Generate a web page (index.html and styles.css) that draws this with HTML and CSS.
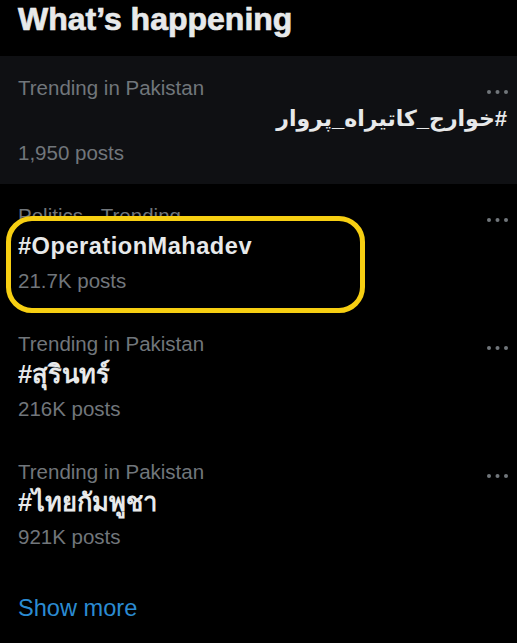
FILE: index.html
```html
<!DOCTYPE html>
<html lang="en">
<head>
<meta charset="utf-8">
<title>What’s happening</title>
<link rel="stylesheet" href="styles.css">
</head>
<body>
<section class="panel">
  <h2 class="title">What’s happening</h2>

  <div class="trend trend-hover">
    <div class="meta"><span>Trending in Pakistan</span><svg class="more" viewBox="0 0 21 25" aria-hidden="true"><circle cx="2" cy="17" r="2"/><circle cx="10.5" cy="17" r="2"/><circle cx="19" cy="17" r="2"/></svg></div>
    <div class="tag tag-rtl" dir="rtl">#خوارج_کاتیراه_پروار</div>
    <div class="count">1,950 posts</div>
  </div>

  <div class="trend">
    <div class="meta"><span>Politics · Trending</span><svg class="more" viewBox="0 0 21 25" aria-hidden="true"><circle cx="2" cy="17" r="2"/><circle cx="10.5" cy="17" r="2"/><circle cx="19" cy="17" r="2"/></svg></div>
    <div class="tag tag-latin">#OperationMahadev</div>
    <div class="count">21.7K posts</div>
    <div class="highlight"></div>
  </div>

  <div class="trend">
    <div class="meta"><span>Trending in Pakistan</span><svg class="more" viewBox="0 0 21 25" aria-hidden="true"><circle cx="2" cy="17" r="2"/><circle cx="10.5" cy="17" r="2"/><circle cx="19" cy="17" r="2"/></svg></div>
    <div class="tag tag-thai">#สุรินทร์</div>
    <div class="count">216K posts</div>
  </div>

  <div class="trend">
    <div class="meta"><span>Trending in Pakistan</span><svg class="more" viewBox="0 0 21 25" aria-hidden="true"><circle cx="2" cy="17" r="2"/><circle cx="10.5" cy="17" r="2"/><circle cx="19" cy="17" r="2"/></svg></div>
    <div class="tag tag-thai">#ไทยกัมพูชา</div>
    <div class="count">921K posts</div>
  </div>

  <a class="show-more" href="#">Show more</a>
</section>
</body>
</html>
```

FILE: styles.css
```css
html, body {
  margin: 0;
  background: #000;
}

body {
  font-family: "Liberation Sans", Arial, "DejaVu Sans", "Noto Sans", sans-serif;
  color: #e7e9ea;
}

.panel {
  width: 517px;
}

.title {
  margin: 0;
  padding: 1px 18px 19px;
  font-size: 32px;
  line-height: 36px;
  font-weight: 700;
  color: #e7e9ea;
  -webkit-text-stroke: 0.7px #e7e9ea;
}

.trend {
  position: relative;
  box-sizing: border-box;
  height: 128px;
  padding: 19px 9px 19px 18px;
}

.trend-hover {
  background: #0f1013;
}

.meta {
  display: flex;
  justify-content: space-between;
  font-size: 20.5px;
  line-height: 25px;
  color: #71767b;
  white-space: nowrap;
}

.more {
  display: block;
  width: 21px;
  height: 25px;
  fill: #71767b;
}

.tag {
  position: relative;
  z-index: 2;
  padding-top: 3px;
  font-size: 23.6px;
  line-height: 31px;
  font-weight: 700;
  color: #e7e9ea;
  white-space: nowrap;
}

.tag-latin {
  letter-spacing: 0.5px;
}

.tag-rtl {
  text-align: right;
  padding-right: 1px;
  font-size: 22px;
}

.tag-thai {
  font-size: 25.5px;
}

.count {
  position: relative;
  z-index: 2;
  margin-top: 6px;
  font-size: 20.5px;
  line-height: 25px;
  color: #71767b;
}

.highlight {
  position: absolute;
  z-index: 1;
  left: 6px;
  top: 32px;
  width: 359px;
  height: 97px;
  box-sizing: border-box;
  border: 5px solid #f7cf12;
  border-radius: 26px;
  background: #000;
}

.show-more {
  display: block;
  padding: 25px 18px;
  font-size: 23.6px;
  line-height: 31.5px;
  color: #2b8bd2;
  text-decoration: none;
}
```
